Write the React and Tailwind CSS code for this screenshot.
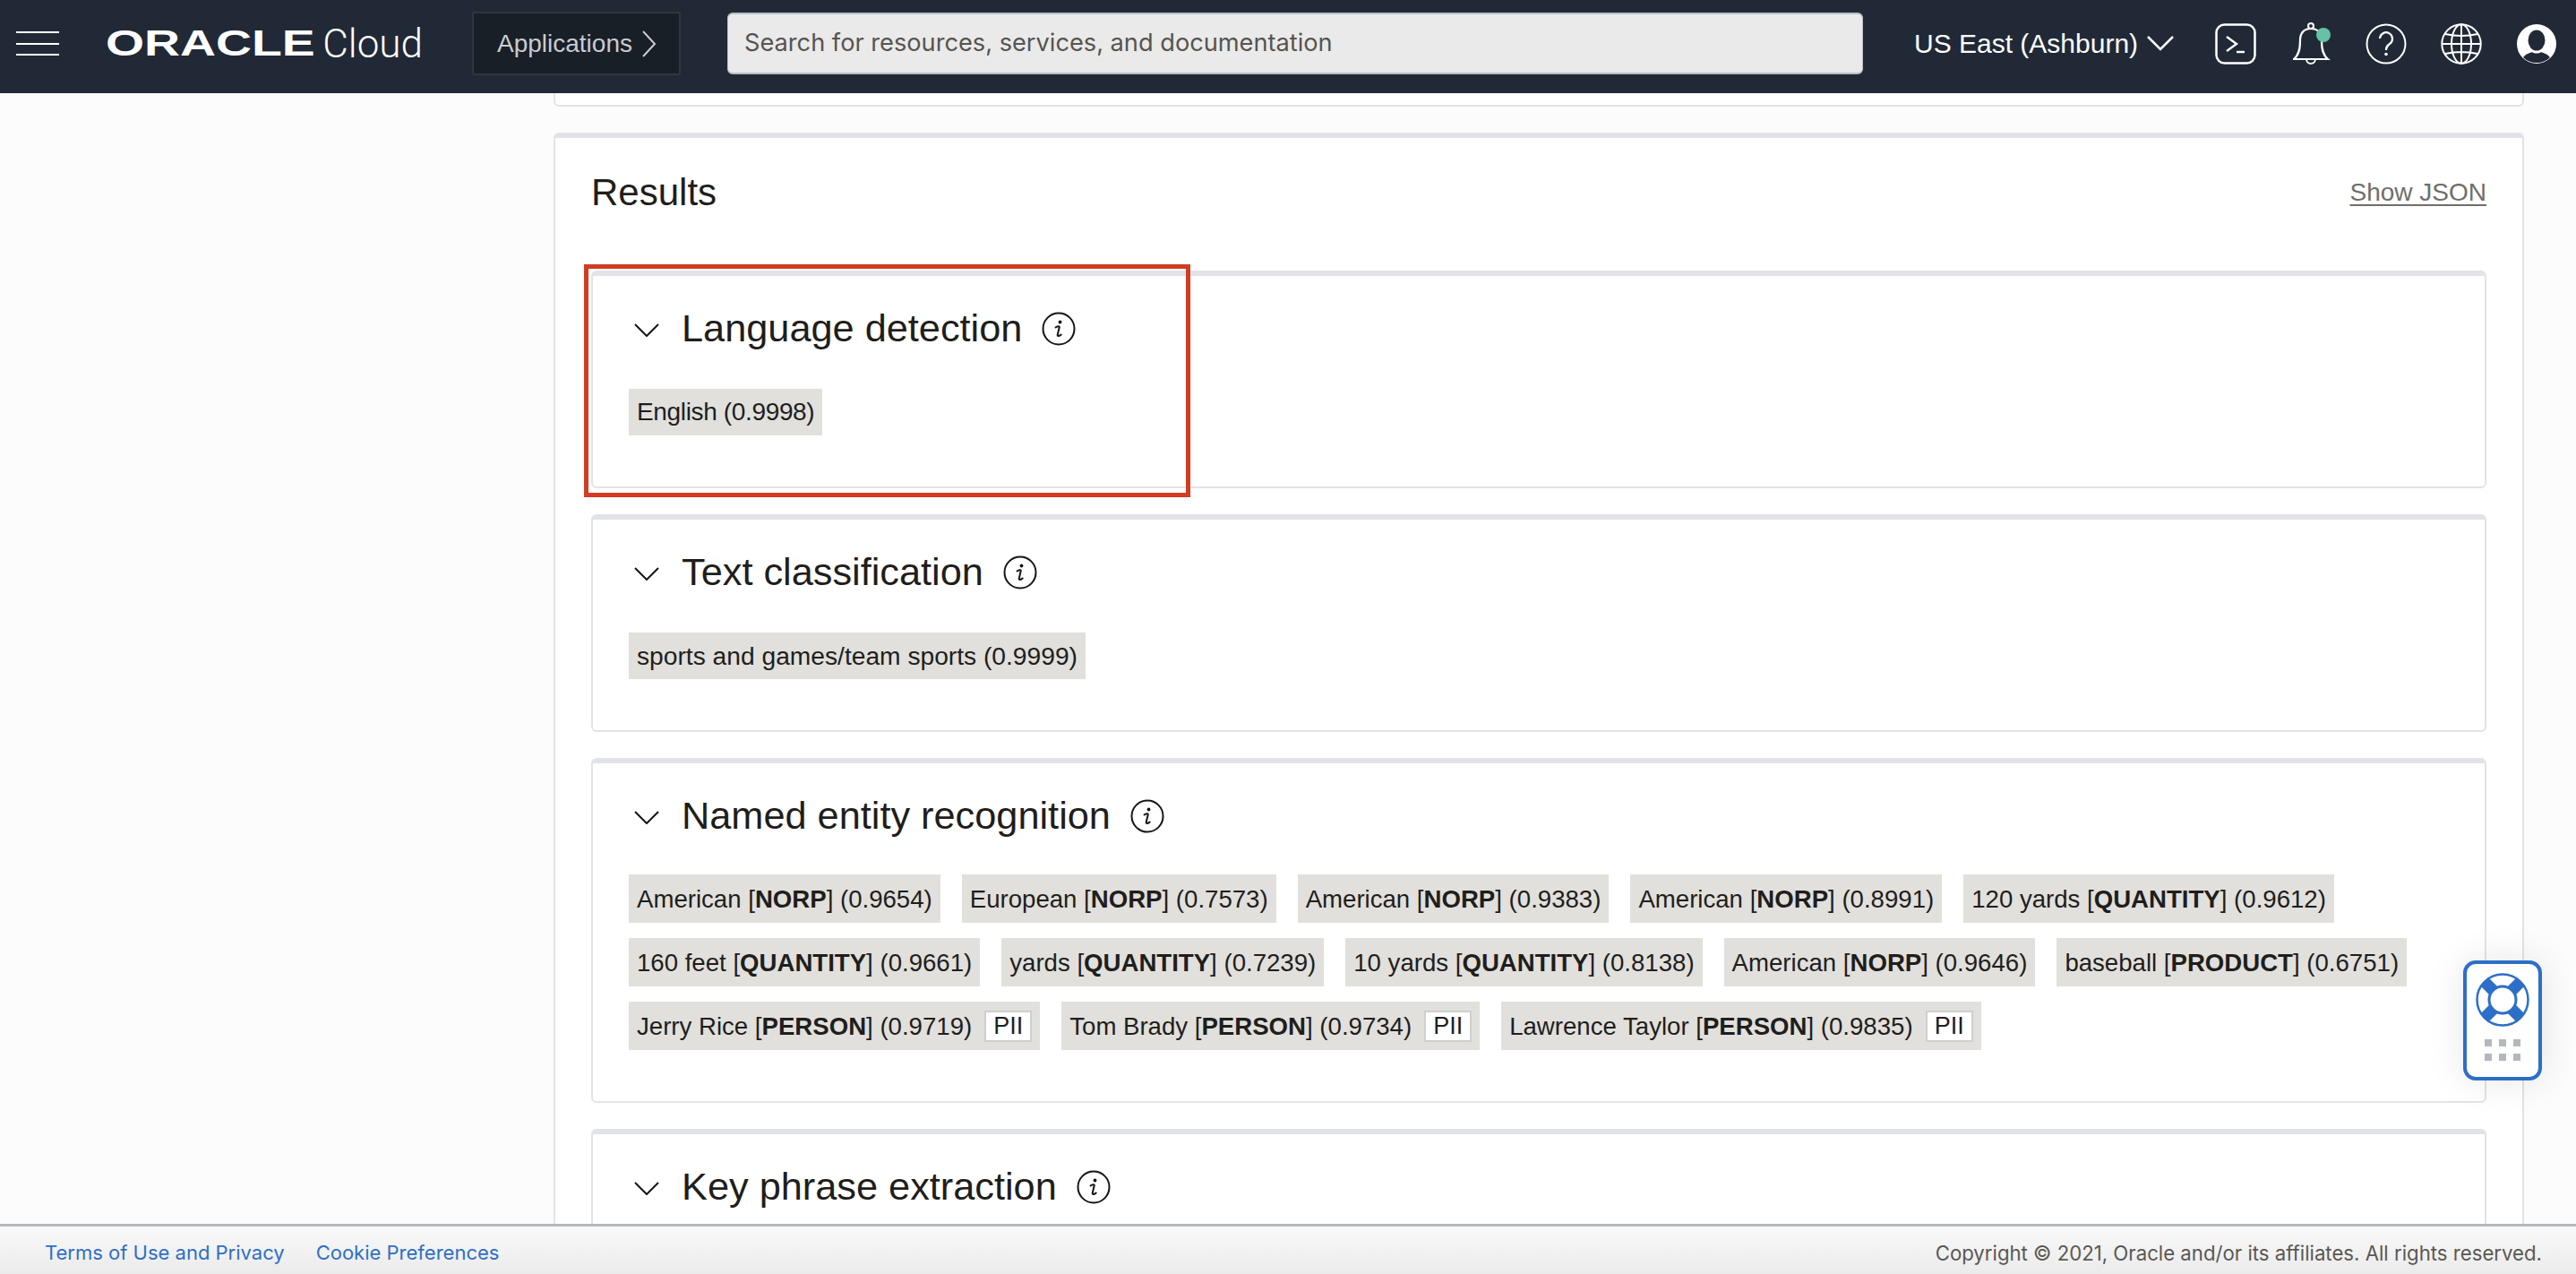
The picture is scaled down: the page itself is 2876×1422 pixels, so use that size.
const helvetica = "font-['Liberation_Sans',Arial,sans-serif]";

const entities = [
  ["American", "NORP", "0.9654"],
  ["European", "NORP", "0.7573"],
  ["American", "NORP", "0.9383"],
  ["American", "NORP", "0.8991"],
  ["120 yards", "QUANTITY", "0.9612"],
  ["160 feet", "QUANTITY", "0.9661"],
  ["yards", "QUANTITY", "0.7239"],
  ["10 yards", "QUANTITY", "0.8138"],
  ["American", "NORP", "0.9646"],
  ["baseball", "PRODUCT", "0.6751"],
  ["Jerry Rice", "PERSON", "0.9719", true],
  ["Tom Brady", "PERSON", "0.9734", true],
  ["Lawrence Taylor", "PERSON", "0.9835", true],
];

function InfoIcon() {
  return (
    <svg width="38" height="38" viewBox="0 0 38 38" fill="none" className="shrink-0">
      <circle cx="19" cy="19" r="17.5" stroke="#161513" strokeWidth="2" />
      <circle cx="20.5" cy="11.5" r="1.9" fill="#161513" />
      <path d="M15.5 17.5c2-1.500 4.500-2 4.200-.2l-2 8.500c-.3 1.800 2.200 1.300 4-.3" stroke="#161513" strokeWidth="2" strokeLinecap="round" />
    </svg>
  );
}

function ResultCard({ title, children }) {
  return (
    <section className="border-x-2 border-b-2 border-t-[6px] border-[#e2e3e8] rounded-[6px] bg-white pl-[40px] pr-[40px]">
      <div className="flex items-center h-[118px]">
        <svg width="28" height="15" viewBox="0 0 28 15" fill="none" className="ml-[6px] mr-[25px] mt-[2px] shrink-0">
          <path d="M1 1l13 13L27 1" stroke="#161513" strokeWidth="2" />
        </svg>
        <h3 className="text-[43.300px] leading-none text-[#1f1e1c] mr-[22px] whitespace-nowrap">{title}</h3>
        <InfoIcon />
      </div>
      {children}
    </section>
  );
}

function Chip({ children, className }) {
  return (
    <span className={`flex items-center bg-[#e1e0dc] px-[9px] text-[#1f1e1c] whitespace-nowrap ${className}`}>
      {children}
    </span>
  );
}

function HeaderIcons() {
  return (
    <div className="flex items-center shrink-0">
      <svg width="46" height="46" viewBox="0 0 46 46" fill="none" className="ml-[46px]">
        <rect x="1.5" y="1.5" width="43" height="43" rx="9" stroke="#fff" strokeWidth="2.5" />
        <path d="M13 15l11 8-11 8" stroke="#fff" strokeWidth="2.4" />
        <path d="M24 32h9" stroke="#fff" strokeWidth="2.4" />
      </svg>
      <svg width="44" height="48" viewBox="0 0 44 48" fill="none" className="ml-[41px]">
        <circle cx="20" cy="4" r="3" stroke="#fff" strokeWidth="2" />
        <path d="M1 41c6-5 7-12 7-21C8 11 13 7 20 7s12 4 12 13c0 9 1 16 7 21z" stroke="#fff" strokeWidth="2.2" />
        <path d="M15 41a5 5 0 0 0 10 0" stroke="#fff" strokeWidth="2" />
        <circle cx="34" cy="14" r="8" fill="#66c1a6" />
      </svg>
      <svg width="46" height="46" viewBox="0 0 46 46" fill="none" className="ml-[37px]">
        <circle cx="23" cy="23" r="21.5" stroke="#fff" strokeWidth="2" />
        <path d="M16 17a7 7 0 1 1 11 6c-3 2-4 3-4 6v1" stroke="#fff" strokeWidth="2.2" />
        <circle cx="23" cy="34.5" r="1.8" fill="#fff" />
      </svg>
      <svg width="46" height="46" viewBox="0 0 46 46" fill="none" className="ml-[38px]">
        <circle cx="23" cy="23" r="21.7" stroke="#fff" strokeWidth="2" />
        <ellipse cx="23" cy="23" rx="11" ry="21.7" stroke="#fff" strokeWidth="2" />
        <path d="M1.5 23h43M5 12c11 2.500 25 2.500 36 0M5 34c11-2.500 25-2.500 36 0M23 1.500v43" stroke="#fff" strokeWidth="2" />
      </svg>
      <svg width="46" height="46" viewBox="0 0 46 46" className="ml-[38px]">
        <circle cx="23" cy="23" r="22" fill="#fff" />
        <ellipse cx="23" cy="19" rx="9.500" ry="11.500" fill="#212936" />
        <path d="M8 38c3-4 8-5 10-6 2 2 8 2 10 0 2 1 7 2 10 6-4 4-9 6-15 6S12 42 8 38z" fill="#212936" />
      </svg>
    </div>
  );
}

export default function App() {
  return (
    <div className={`relative h-screen flex flex-col overflow-hidden bg-[#fcfcfc] ${helvetica}`}>
      <header className="flex items-center h-[104px] shrink-0 bg-[#212936] pb-[7px]">
        <div className="flex flex-col gap-[10.500px] ml-[18px] w-[48px] shrink-0">
          <span className="h-[2px] bg-white" />
          <span className="h-[2px] bg-white" />
          <span className="h-[2px] bg-white" />
        </div>
        <div className="flex items-center ml-[52px] w-[354px] shrink-0 text-white">
          <span className="w-[229px] origin-left scale-x-[1.35] text-[41px] leading-none font-bold">ORACLE</span>
          <span className="ml-[14px] font-['Roboto',sans-serif] font-light text-[44px] leading-none">Cloud</span>
        </div>
        <button className="flex items-center h-[71px] w-[233px] ml-[55px] pl-[26px] bg-[#181f27] border-2 border-[#2e3640] rounded-[3px] text-[28px] text-[#c9cbce] shrink-0">
          Applications
          <svg width="16" height="30" viewBox="0 0 16 30" fill="none" className="ml-[11px]">
            <path d="M1 1l13 14L1 29" stroke="#c9cbce" strokeWidth="2" />
          </svg>
        </button>
        <div className="flex items-center h-[69px] w-[1268px] ml-[52px] pl-[18px] shrink-0 bg-[#eaeaea] border-t-2 border-b-2 border-l border-r border-[#b8bec6] rounded-[6px] font-['Inter',sans-serif] text-[27.2px] text-[#56544f]">
          Search for resources, services, and documentation
        </div>
        <span className="ml-[57px] w-[251px] shrink-0 text-[30px] text-white whitespace-nowrap">US East (Ashburn)</span>
        <svg width="30" height="17" viewBox="0 0 30 17" fill="none" className="ml-[9px] shrink-0">
          <path d="M1 1l14 14L29 1" stroke="#fff" strokeWidth="2.500" />
        </svg>
        <HeaderIcons />
      </header>

      <div className="flex flex-1 min-h-0">
        <aside className="w-[618px] shrink-0" />
        <main className="w-[2200px] shrink-0 overflow-hidden">
          <div className="h-[15px] border-x-2 border-b-2 border-[#e2e3e8] rounded-b-[6px] bg-white" />
          <div className="mt-[29px] border-x-2 border-t-[6px] border-[#e2e3e8] rounded-t-[6px] bg-white px-[40px]">
            <div className="flex items-center justify-between h-[118px] pt-[3px]">
              <h2 className="text-[42px] leading-none text-[#1f1e1c]">Results</h2>
              <a className="text-[28px] text-[#6f6e6b] underline underline-offset-[4px]">Show JSON</a>
            </div>
            <div className="mt-[30px] flex flex-col gap-[29px]">
              <ResultCard title="Language detection">
                <div className="flex h-[117px] pt-[8px] items-start">
                  <Chip className="h-[52px] text-[28px] tracking-[-0.35px]">English (0.9998)</Chip>
                </div>
              </ResultCard>
              <ResultCard title="Text classification">
                <div className="flex h-[117px] pt-[8px] items-start">
                  <Chip className="h-[52px] text-[28.200px]">sports and games/team sports (0.9999)</Chip>
                </div>
              </ResultCard>
              <ResultCard title="Named entity recognition">
                <div className="flex flex-wrap gap-x-[24px] gap-y-[17px] h-[259px] pt-[6px] content-start">
                  {entities.map(([text, label, score, pii]) => (
                    <Chip key={text + score} className="h-[54px] pt-[1px] text-[27.600px]">
                      <span>
                        {text} [<b>{label}</b>] ({score})
                      </span>
                      {pii && (
                        <span className="flex items-center ml-[14px] h-[35px] px-[8px] bg-white border-2 border-[#cfcfcd] text-[27px]">
                          PII
                        </span>
                      )}
                    </Chip>
                  ))}
                </div>
              </ResultCard>
              <ResultCard title="Key phrase extraction" />
            </div>
          </div>
        </main>
      </div>

      <footer className="flex items-center justify-between h-[56px] shrink-0 border-t-[3px] border-[#b5b9bd] bg-linear-to-b from-[#f9f9f9] to-[#ebebeb] pr-[38px] pl-[50px] pt-[6px] font-['Inter',sans-serif] text-[22px]">
        <div className="flex gap-[35px] text-[#2f6fc4]">
          <a>Terms of Use and Privacy</a>
          <a>Cookie Preferences</a>
        </div>
        <span className="text-[22.2px] text-[#5a5854]">Copyright © 2021, Oracle and/or its affiliates. All rights reserved.</span>
      </footer>

      <div className="absolute left-[2750px] top-[1072px] flex flex-col items-center w-[88px] h-[134px] bg-white border-[4px] border-[#2d6fc7] rounded-[14px] shadow-[0_0_40px_rgba(0,0,0,0.1)]">
        <svg width="60" height="60" viewBox="0 0 60 60" className="mt-[10px]">
          <circle cx="30" cy="30" r="28.500" fill="#fff" stroke="#2d6fc7" strokeWidth="2.500" />
          <path d="M10 10L50 50M50 10L10 50" stroke="#2d6fc7" strokeWidth="13" />
          <circle cx="30" cy="30" r="15" fill="#fff" stroke="#2d6fc7" strokeWidth="3" />
        </svg>
        <div className="grid grid-cols-3 gap-x-[8px] gap-y-[8px] mt-[14px]">
          {[0, 1, 2, 3, 4, 5].map((i) => (
            <span key={i} className="w-[8px] h-[8px] bg-[#b3b8be]" />
          ))}
        </div>
      </div>

      <div className="absolute left-[652px] top-[295px] w-[677px] h-[260px] border-[5px] border-[#d13c22]" />
    </div>
  );
}
